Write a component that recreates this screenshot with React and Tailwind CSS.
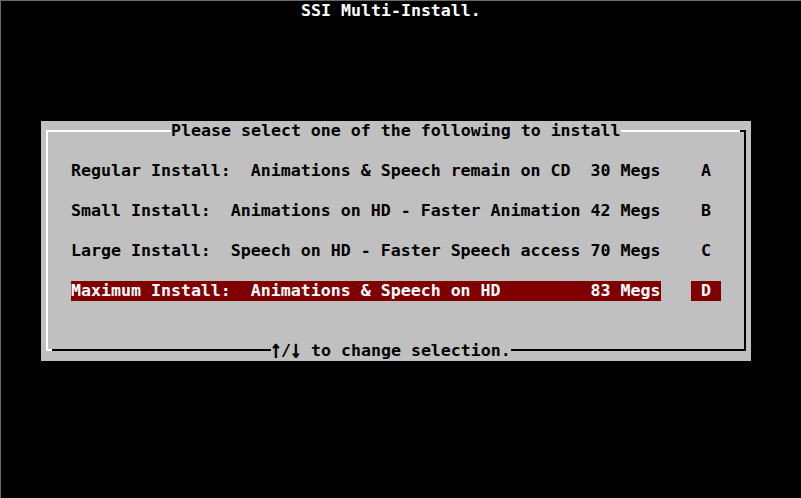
import React from "react";

const rows = [
  { text: "Regular Install:  Animations & Speech remain on CD  30 Megs", key: "A" },
  { text: "Small Install:  Animations on HD - Faster Animation 42 Megs", key: "B" },
  { text: "Large Install:  Speech on HD - Faster Speech access 70 Megs", key: "C" },
  { text: "Maximum Install:  Animations & Speech on HD         83 Megs", key: "D", active: true },
];

export default function App() {
  return (
    <div className="w-[801px] h-[498px] overflow-hidden bg-black border-t border-l border-[#6b6b60] font-['DejaVu_Sans_Mono','Liberation_Mono',monospace] text-[16.6px] leading-5 font-bold">
      <div className="h-5 pl-[300px] text-white whitespace-pre">SSI Multi-Install.</div>
      <div className="mt-[100px] ml-[40px] w-[710px] h-[240px] bg-[#c0c0c0] relative text-black">
        {/* frame */}
        <div className="absolute left-[5px] top-[9px] right-[5px] bottom-[10px] border-2 border-t-white border-l-white border-r-black border-b-black" />
        <div className="absolute left-[699px] top-[9px] w-[6px] h-[2px] bg-black" />
        <div className="absolute left-[5px] top-[228px] w-[6px] h-[2px] bg-white" />

        <div className="relative flex flex-col">
          <div className="h-5 pl-[130px] flex">
            <span className="bg-[#c0c0c0] whitespace-pre">Please select one of the following to install</span>
          </div>
          {rows.map((r) => (
            <div key={r.key} className="mt-5 h-5 pl-[30px] flex">
              <span
                className={
                  r.active
                    ? "w-[590px] whitespace-pre bg-[#800000] text-white"
                    : "w-[590px] whitespace-pre"
                }
              >
                {r.text}
              </span>
              <span
                className={
                  r.active
                    ? "ml-[30px] w-[30px] text-center bg-[#800000] text-white"
                    : "ml-[30px] w-[30px] text-center"
                }
              >
                {r.key}
              </span>
            </div>
          ))}
          <div className="mt-10 h-5 pl-[230px] flex">
            <span className="bg-[#c0c0c0] whitespace-pre flex">
              <span className="inline-block w-[10px] text-center scale-y-[1.6] scale-x-[1.2] translate-y-[-1px]">↑</span>
              <span>/</span>
              <span className="inline-block w-[10px] text-center scale-y-[1.6] scale-x-[1.2] translate-y-[-1px]">↓</span>
              <span> to change selection.</span>
            </span>
          </div>
        </div>
      </div>
    </div>
  );
}
